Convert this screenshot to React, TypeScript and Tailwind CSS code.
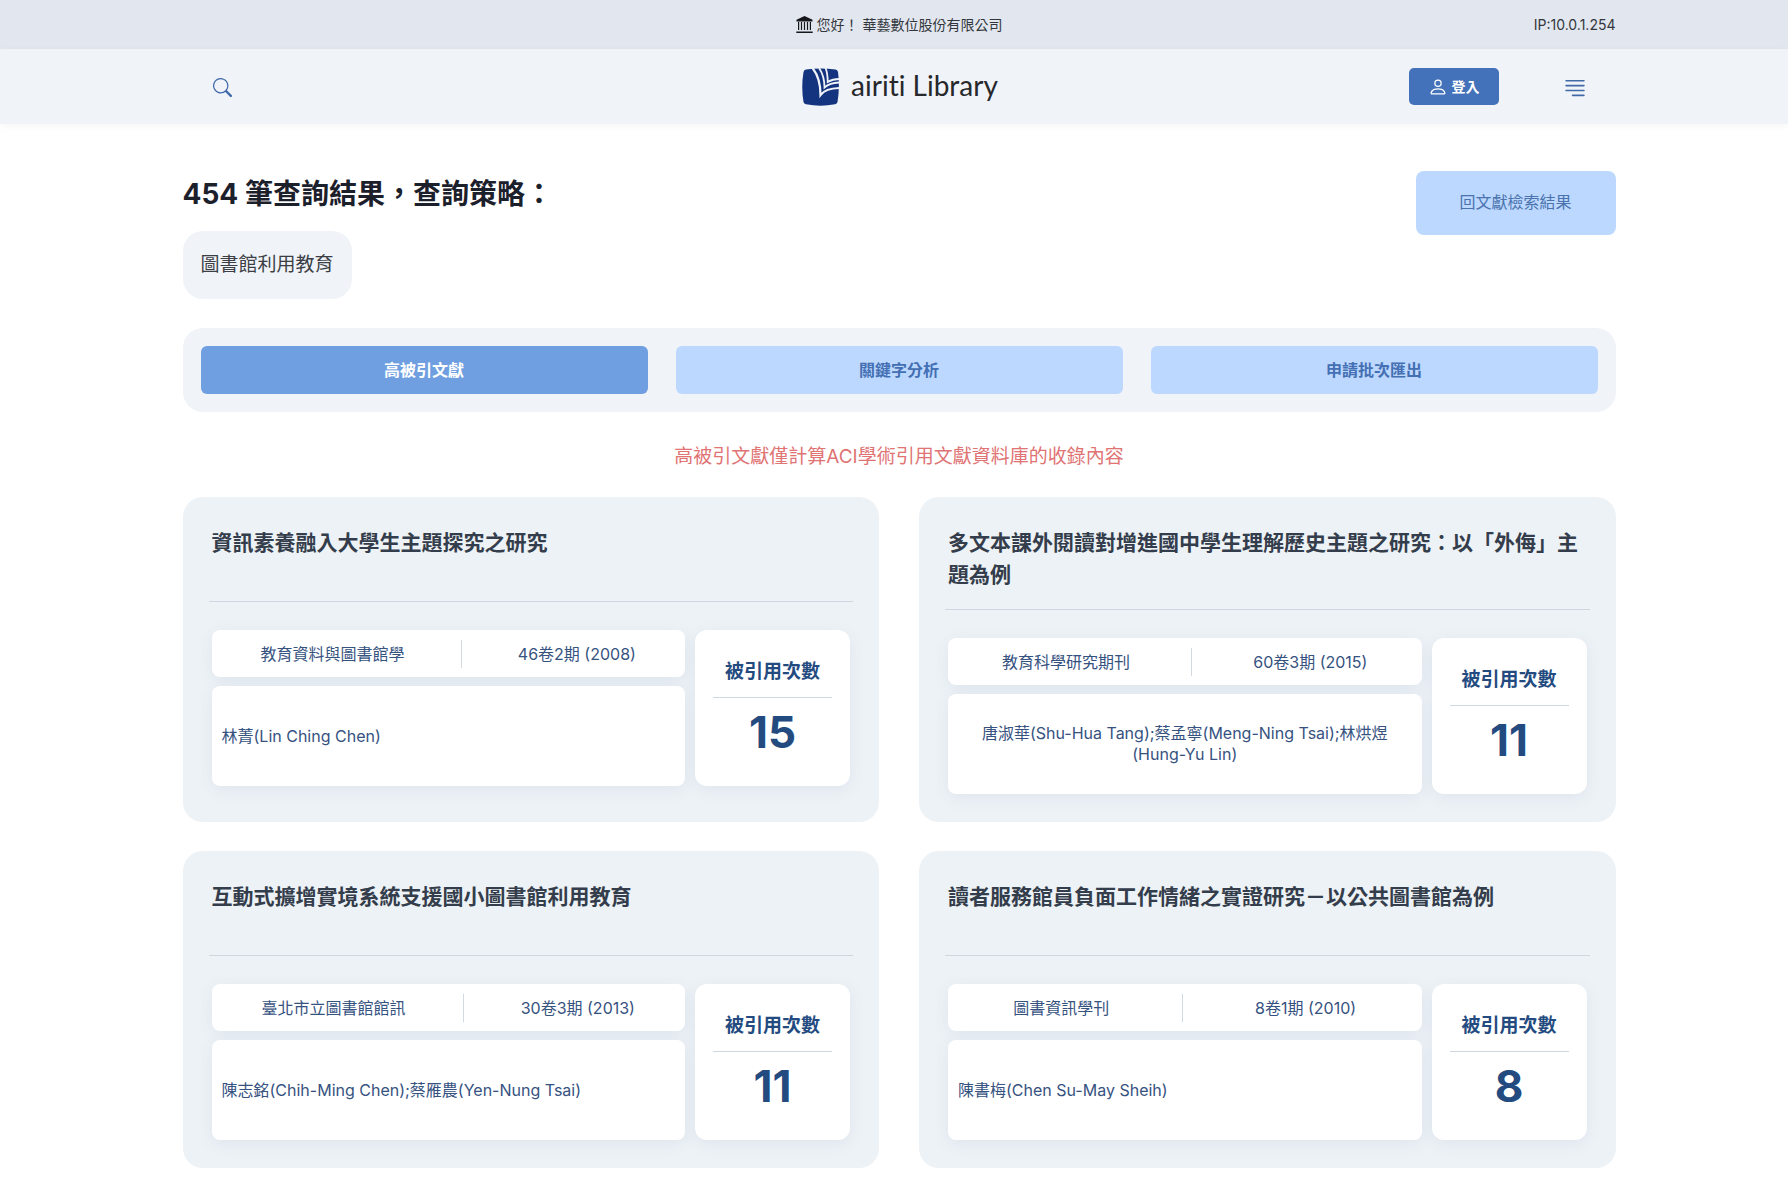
import { BsJustifyRight, BsPerson, BsSearch } from 'react-icons/bs'

interface Article {
  title: string
  journal: string
  issue: string
  authors: string
  cited: number
}

const tabs = ['高被引文獻', '關鍵字分析', '申請批次匯出']

const articles: Article[] = [
  {
    title: '資訊素養融入大學生主題探究之研究',
    journal: '教育資料與圖書館學',
    issue: '46卷2期 (2008)',
    authors: '林菁(Lin Ching Chen)',
    cited: 15,
  },
  {
    title: '多文本課外閱讀對增進國中學生理解歷史主題之研究：以「外侮」主題為例',
    journal: '教育科學研究期刊',
    issue: '60卷3期 (2015)',
    authors: '唐淑華(Shu-Hua Tang);蔡孟寧(Meng-Ning Tsai);林烘煜(Hung-Yu Lin)',
    cited: 11,
  },
  {
    title: '互動式擴增實境系統支援國小圖書館利用教育',
    journal: '臺北市立圖書館館訊',
    issue: '30卷3期 (2013)',
    authors: '陳志銘(Chih-Ming Chen);蔡雁農(Yen-Nung Tsai)',
    cited: 11,
  },
  {
    title: '讀者服務館員負面工作情緒之實證研究－以公共圖書館為例',
    journal: '圖書資訊學刊',
    issue: '8卷1期 (2010)',
    authors: '陳書梅(Chen Su-May Sheih)',
    cited: 8,
  },
]

function Logo() {
  return (
    <a href="#" className="flex items-center gap-3 text-[#26282c]">
      <svg width="37" height="38" viewBox="0 0 37 38" aria-hidden="true">
        <path
          d="M4 1.500Q18.500 -.5 33.500 1.500Q35.500 1.800 36 4Q38 19 35.500 34Q35 36 33 36.300Q18.500 39 4 36.300Q2 36 1.500 34Q-1 19 1.500 4Q2 1.800 4 1.500Z"
          fill="#14347f"
        />
        <g fill="none" stroke="#f0f3f8">
          <path strokeWidth="2.200" d="M10.500 0C14.500 5 18.500 14 18.500 27C22 22.500 28 20.300 37 20" />
          <path strokeWidth="1.800" d="M17 0C20.500 5 22.500 12 22.500 19.500C26.500 16 31 14.700 37 14.500" />
          <path strokeWidth="1.800" d="M23.500 0C25.200 4 25.700 9 25.700 14C29 12 33 11 37 11" />
        </g>
      </svg>
      <span className="pb-1 font-['Lato',sans-serif] text-[28px] leading-8 [font-variant-ligatures:none]">
        airiti Library
      </span>
    </a>
  )
}

function LibraryIcon() {
  return (
    <svg width="17" height="18" viewBox="0 0 17 18" fill="#15171a" aria-hidden="true">
      <path d="M8.500 0L16.500 3.800V5.500H.5V3.800Z" />
      <path d="M2 6h1.200v8H2zM4.900 6h1.200v8H4.900zM7.900 6h1.200v8H7.900zM10.900 6h1.200v8h-1.200zM13.800 6h1.200v8h-1.200z" />
      <path d="M.3 15.500h16.400v1.500H.3z" />
    </svg>
  )
}

function ArticleCard({ article }: { article: Article }) {
  return (
    <article className="rounded-[20px] bg-[#edf2f6] px-[29px] pt-[30px] pb-7">
      <h2 className="min-h-14 text-[21px] leading-8 font-bold text-[#343d4b]">{article.title}</h2>
      <hr className="-mx-[3px] mt-[18px] mb-7 border-[#cfd6df]" />
      <div className="flex gap-[10px] text-[#36527f]">
        <div className="flex flex-1 flex-col gap-[9px]">
          <div className="flex h-[47px] items-center rounded-lg bg-white text-center text-base shadow-[0_4px_16px_rgba(60,90,140,0.08)]">
            <span className="flex-auto">{article.journal}</span>
            <span className="mx-[7px] h-7 w-px bg-[#d3d9e1]" />
            <span className="flex-auto">{article.issue}</span>
          </div>
          <div className="flex flex-1 items-center rounded-lg bg-white px-[10px] shadow-[0_4px_16px_rgba(60,90,140,0.08)]">
            <p className="text-center text-base leading-[21px]">{article.authors}</p>
          </div>
        </div>
        <div className="flex h-[156px] w-[155px] flex-col items-center rounded-xl bg-white px-[18px] pt-7 text-[#244b80] shadow-[0_4px_16px_rgba(60,90,140,0.08)]">
          <p className="text-[19px] leading-7 font-bold">被引用次數</p>
          <hr className="mt-[11px] w-full border-[#cfd6df]" />
          <p className="mt-[10px] text-[44px] leading-12 font-bold">{article.cited}</p>
        </div>
      </div>
    </article>
  )
}

export default function App() {
  return (
    <div lang="zh-Hant" className="min-h-screen bg-white font-['Inter','Noto_Sans_CJK_TC',sans-serif]">
      <div className="bg-[#e2e6ee] pl-[10px]">
        <div className="mx-auto grid h-[49px] max-w-[1433px] grid-cols-3 items-center text-sm text-[#33373d]">
          <p className="col-start-2 flex items-center justify-center gap-1 whitespace-pre">
            <LibraryIcon />
            您好！ 華藝數位股份有限公司
          </p>
          <p className="text-right">IP:10.0.1.254</p>
        </div>
      </div>

      <header className="bg-[#f0f3f8] pl-[10px] shadow-[0_2px_8px_rgba(0,0,0,0.04)]">
        <div className="mx-auto grid h-[75px] max-w-[1433px] grid-cols-[1fr_auto_1fr] items-center pr-7 pl-[30px]">
          <button type="button" aria-label="搜尋" className="justify-self-start pt-0.5 text-[#3f69aa]">
            <BsSearch className="size-[19px]" />
          </button>
          <Logo />
          <div className="flex items-center justify-end gap-[63px]">
            <button
              type="button"
              className="flex h-[37px] w-[90px] items-center justify-center gap-1 rounded-[5px] bg-[#4472ba] text-sm font-bold text-white"
            >
              <BsPerson className="size-5" />
              登入
            </button>
            <button type="button" aria-label="選單" className="pt-0.5 text-[#4069a8]">
              <BsJustifyRight className="size-[26px]" />
            </button>
          </div>
        </div>
      </header>

      <main className="pl-[10px]">
        <div className="mx-auto max-w-[1433px] pt-[47px] pb-4">
          <div className="flex items-start justify-between">
            <div>
              <h1 className="text-[28px] leading-[46px] font-bold text-[#1c202b]">454 筆查詢結果，查詢策略：</h1>
              <p className="mt-[14px] inline-flex h-[68px] items-center rounded-[20px] bg-[#f0f3f8] px-[18px] text-[19px] text-[#3b3f45]">
                圖書館利用教育
              </p>
            </div>
            <button type="button" className="h-16 w-[200px] rounded-lg bg-[#bcd8ff] pb-0.5 text-base text-[#4a73ae]">
              回文獻檢索結果
            </button>
          </div>

          <nav className="mt-[29px] grid grid-cols-3 gap-7 rounded-[20px] bg-[#f0f3f8] p-[18px]">
            {tabs.map((tab, i) => (
              <button
                key={tab}
                type="button"
                className={`h-12 rounded-md text-base font-bold ${
                  i === 0 ? 'bg-[#6f9fe0] text-white' : 'bg-[#bcd8ff] text-[#4470b3]'
                }`}
              >
                {tab}
              </button>
            ))}
          </nav>

          <p className="mt-[31px] mb-[26px] text-center text-[19px] leading-7 text-[#e07373]">
            高被引文獻僅計算ACI學術引用文獻資料庫的收錄內容
          </p>

          <section className="grid grid-cols-2 gap-x-10 gap-y-[29px]">
            {articles.map((article) => (
              <ArticleCard key={article.title} article={article} />
            ))}
          </section>
        </div>
      </main>
    </div>
  )
}
